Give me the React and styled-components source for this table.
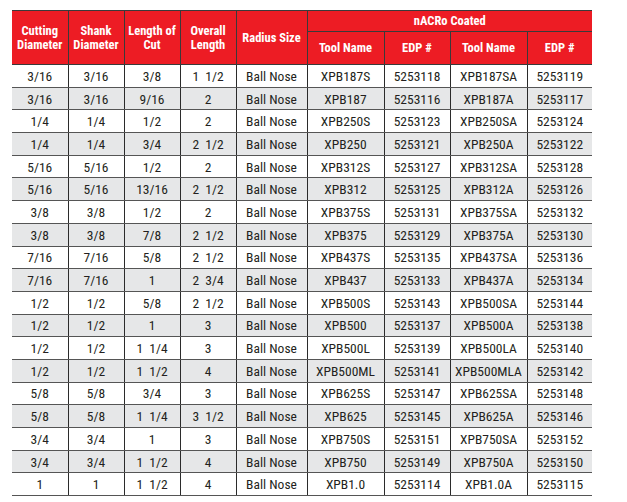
import React from 'react'
import styled, { createGlobalStyle } from 'styled-components'

const GlobalStyle = createGlobalStyle`
    body {
        margin: 0;
        background: #fff;
        font-family: Roboto, "Liberation Sans", sans-serif;
    }
`

const rows = [
    ['3/16', '3/16', '3/8', '1  1/2', 'XPB187S', '5253118', 'XPB187SA', '5253119'],
    ['3/16', '3/16', '9/16', '2', 'XPB187', '5253116', 'XPB187A', '5253117'],
    ['1/4', '1/4', '1/2', '2', 'XPB250S', '5253123', 'XPB250SA', '5253124'],
    ['1/4', '1/4', '3/4', '2  1/2', 'XPB250', '5253121', 'XPB250A', '5253122'],
    ['5/16', '5/16', '1/2', '2', 'XPB312S', '5253127', 'XPB312SA', '5253128'],
    ['5/16', '5/16', '13/16', '2  1/2', 'XPB312', '5253125', 'XPB312A', '5253126'],
    ['3/8', '3/8', '1/2', '2', 'XPB375S', '5253131', 'XPB375SA', '5253132'],
    ['3/8', '3/8', '7/8', '2  1/2', 'XPB375', '5253129', 'XPB375A', '5253130'],
    ['7/16', '7/16', '5/8', '2  1/2', 'XPB437S', '5253135', 'XPB437SA', '5253136'],
    ['7/16', '7/16', '1', '2  3/4', 'XPB437', '5253133', 'XPB437A', '5253134'],
    ['1/2', '1/2', '5/8', '2  1/2', 'XPB500S', '5253143', 'XPB500SA', '5253144'],
    ['1/2', '1/2', '1', '3', 'XPB500', '5253137', 'XPB500A', '5253138'],
    ['1/2', '1/2', '1  1/4', '3', 'XPB500L', '5253139', 'XPB500LA', '5253140'],
    ['1/2', '1/2', '1  1/2', '4', 'XPB500ML', '5253141', 'XPB500MLA', '5253142'],
    ['5/8', '5/8', '3/4', '3', 'XPB625S', '5253147', 'XPB625SA', '5253148'],
    ['5/8', '5/8', '1  1/4', '3  1/2', 'XPB625', '5253145', 'XPB625A', '5253146'],
    ['3/4', '3/4', '1', '3', 'XPB750S', '5253151', 'XPB750SA', '5253152'],
    ['3/4', '3/4', '1  1/2', '4', 'XPB750', '5253149', 'XPB750A', '5253150'],
    ['1', '1', '1  1/2', '4', 'XPB1.0', '5253114', 'XPB1.0A', '5253115'],
]

const widths = [56, 56, 56, 56, 71, 77, 66, 77, 65]

export default function App() {
    return (
        <Page>
            <GlobalStyle />
            <Table>
                <colgroup>
                    {widths.map((w, i) => <col key={i} style={{width: w}} />)}
                </colgroup>
                <thead>
                    <tr>
                        <Head rowSpan={2}>Cutting<br/>Diameter</Head>
                        <Head rowSpan={2}>Shank<br/>Diameter</Head>
                        <Head rowSpan={2}>Length of<br/>Cut</Head>
                        <Head rowSpan={2}>Overall<br/>Length</Head>
                        <Head rowSpan={2}>Radius Size</Head>
                        <Group colSpan={4}>nACRo Coated</Group>
                    </tr>
                    <tr>
                        <Head $sub>Tool Name</Head>
                        <Head $sub>EDP #</Head>
                        <Head $sub>Tool Name</Head>
                        <Head $sub>EDP #</Head>
                    </tr>
                </thead>
                <tbody>
                    {rows.map((r, i) => (
                        <Row key={i} $striped={i % 2 === 1}>
                            <Cell>{r[0]}</Cell>
                            <Cell>{r[1]}</Cell>
                            <Cell>{r[2]}</Cell>
                            <Cell>{r[3]}</Cell>
                            <Cell>Ball Nose</Cell>
                            <Cell>{r[4]}</Cell>
                            <Cell>{r[5]}</Cell>
                            <Cell>{r[6]}</Cell>
                            <Cell>{r[7]}</Cell>
                        </Row>
                    ))}
                </tbody>
            </Table>
        </Page>
    )
}

const Page = styled.div`
    padding: 10px 12px;
`

const Table = styled.table`
    border-collapse: collapse;
    table-layout: fixed;
    width: 580px;
    border-top: 1px solid #3a3a3a;
    border-bottom: 1px solid #3a3a3a;

    th:first-child, td:first-child {
        border-left: none;
    }

    th:last-child, td:last-child {
        border-right: none;
    }
`

const Head = styled.th`
    background: #ed1c24;
    color: #fff;
    font-weight: bold;
    font-size: 12.5px;
    font-stretch: 75%;
    line-height: 14px;
    text-align: center;
    vertical-align: middle;
    white-space: nowrap;
    padding: 0;
    height: ${p => p.$sub ? '32px' : 'auto'};
    border: 1px solid #3a3a3a;
    border-top: none;
`

const Group = styled(Head)`
    height: 20px;
    border-bottom: 1px solid #3a3a3a;
`

const Row = styled.tr`
    background: ${p => p.$striped ? '#e6e7e8' : '#fff'};
`

const Cell = styled.td`
    height: 21.7px;
    padding: 0;
    text-align: center;
    vertical-align: middle;
    white-space: pre;
    font-size: 13.5px;
    font-stretch: 80%;
    color: #231f20;
    border-left: 1.5px solid #2b2b2b;
    border-right: 1.5px solid #2b2b2b;
    border-bottom: 1px solid #555;
`
